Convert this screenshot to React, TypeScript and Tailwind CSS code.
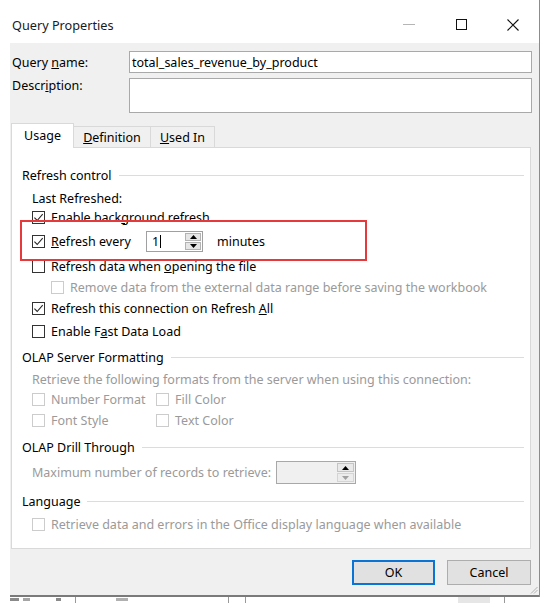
import React from "react";

function Tick() {
  return (
    <svg width="11" height="11" viewBox="0 0 11 11" fill="none" stroke="#262626" strokeWidth="1.1">
      <path d="M1.4 5.6 L4.2 8.5 L9.7 2.1" />
    </svg>
  );
}

function Checkbox({ checked = false, disabled = false }: { checked?: boolean; disabled?: boolean }) {
  return (
    <span
      className={`flex h-[13px] w-[13px] shrink-0 items-center justify-center border bg-white ${
        disabled ? "border-[#cccccc]" : "border-[#333333]"
      }`}
    >
      {checked && <Tick />}
    </span>
  );
}

function Group({ label }: { label: string }) {
  return (
    <div className="flex h-[19px] items-center gap-[7px] pl-[10px] pr-[6px]">
      <span className="whitespace-nowrap">{label}</span>
      <span className="h-px flex-1 bg-[#dcdcdc]" />
    </div>
  );
}

function Option({
  children,
  checked = false,
  disabled = false,
  pad = "pl-[20px]",
  className = "",
}: {
  children: React.ReactNode;
  checked?: boolean;
  disabled?: boolean;
  pad?: string;
  className?: string;
}) {
  return (
    <div className={`flex h-[19px] items-center gap-[6px] ${pad} ${disabled ? "text-[#9a9a9a]" : ""} ${className}`}>
      <Checkbox checked={checked} disabled={disabled} />
      <span className="whitespace-nowrap">{children}</span>
    </div>
  );
}

function Arrow({ up, color = "#000" }: { up?: boolean; color?: string }) {
  return (
    <svg width="7" height="4" viewBox="0 0 7 4">
      <path d={up ? "M0 4 L3.5 0 L7 4 Z" : "M0 0 L3.5 4 L7 0 Z"} fill={color} />
    </svg>
  );
}

export default function App() {
  return (
    <div className="relative h-[608px] w-[552px] overflow-hidden bg-white font-['Noto_Sans',sans-serif] text-[12.5px] leading-[16px] text-black">
      <div className="w-[540px] border-r border-[#8c8c8c]">
        {/* title bar */}
        <div className="flex h-[43px] items-center bg-white pt-[6px]">
          <span className="pl-[12px] text-[12.7px] text-[#1a1a1a]">Query Properties</span>
          <div className="ml-auto flex">
            <span className="flex h-[30px] w-[52px] items-center justify-center">
              <span className="h-px w-[12px] bg-[#b5b5b5]" />
            </span>
            <span className="flex h-[30px] w-[52px] items-center justify-center">
              <span className="h-[11px] w-[11px] border border-[#111]" />
            </span>
            <span className="flex h-[30px] w-[52px] items-center justify-center">
              <svg width="12" height="12" viewBox="0 0 12 12" stroke="#111" strokeWidth="1.1">
                <path d="M0.5 0.5 L11.5 11.5 M11.5 0.5 L0.5 11.5" />
              </svg>
            </span>
          </div>
        </div>

        {/* body */}
        <div className="relative ml-[10px] flex h-[554px] flex-col border-b-2 border-[#7a7a7a] bg-[#f0f0f0] pl-[1px] pt-[8px]">
          <div className="flex h-[22px] items-center">
            <span className="w-[118px] pl-[1px] pt-px">
              Query <u>n</u>ame:
            </span>
            <div className="flex h-[22px] w-[403px] items-center border border-[#a9a9a9] bg-white pl-[2px] pt-px">
              total_sales_revenue_by_product
            </div>
          </div>
          <div className="mt-[5px] flex items-start">
            <span className="w-[118px] pl-[1px]">
              Descr<u>i</u>ption:
            </span>
            <div className="h-[35px] w-[403px] border border-[#a9a9a9] bg-white" />
          </div>

          {/* tabs */}
          <div className="mt-[10px] flex h-[24px] items-end">
            <div className="relative z-10 -mb-px flex h-[25px] w-[63px] items-center justify-center border border-b-0 border-[#d9d9d9] bg-white">
              Usa<u>g</u>e
            </div>
            <div className="flex h-[21px] w-[77px] items-center justify-center border border-b-0 border-l-0 border-[#d9d9d9] pt-px">
              <u>D</u>efinition
            </div>
            <div className="flex h-[21px] w-[64px] items-center justify-center border border-b-0 border-l-0 border-[#d9d9d9] pt-px">
              <u>U</u>sed In
            </div>
          </div>

          {/* panel */}
          <div className="relative flex h-[402px] w-[520px] flex-col border border-[#d9d9d9] bg-white pt-[18px]">
            <Group label="Refresh control" />
            <div className="mt-[4px] flex h-[19px] items-center pl-[20px]">Last Refreshed:</div>
            <Option checked>
              Enable back<u>g</u>round refresh
            </Option>
            <div className="mt-[4px] flex h-[21px] items-center gap-[6px] pl-[20px]">
              <Checkbox checked />
              <span className="w-[89px] whitespace-nowrap">
                <u>R</u>efresh every
              </span>
              <div className="flex h-[21px] w-[57px] border border-[#a0a0a0] bg-white">
                <div className="flex flex-1 items-center pl-[5px]">
                  1<span className="ml-px h-[13px] w-px bg-black" />
                </div>
                <div className="flex w-[18px] flex-col gap-px p-px">
                  <span className="flex flex-1 items-center justify-center border border-[#b3b3b3] bg-[#e6e6e6]">
                    <Arrow up />
                  </span>
                  <span className="flex flex-1 items-center justify-center border border-[#b3b3b3] bg-[#e6e6e6]">
                    <Arrow />
                  </span>
                </div>
              </div>
              <span className="ml-[8px]">minutes</span>
            </div>
            <Option className="mt-[5px]">
              Refresh data when <u>o</u>pening the file
            </Option>
            <Option disabled pad="pl-[39px]" className="mt-[2px]">
              Remove data from the external data range before saving the workbook
            </Option>
            <Option checked className="mt-[2px]">
              Refresh this connection on Refresh <u>A</u>ll
            </Option>
            <Option className="mt-[4px]">
              Enable F<u>a</u>st Data Load
            </Option>

            <div className="mt-[7px]">
              <Group label="OLAP Server Formatting" />
            </div>
            <div className="mt-[3px] flex h-[19px] items-center pl-[20px] text-[#9a9a9a]">
              Retrieve the following formats from the server when using this connection:
            </div>
            <div className="mt-px flex">
              <Option disabled className="w-[144px]">
                Number Format
              </Option>
              <Option disabled pad="pl-0">
                Fill Color
              </Option>
            </div>
            <div className="mt-[2px] flex">
              <Option disabled className="w-[144px]">
                Font Style
              </Option>
              <Option disabled pad="pl-0">
                Text Color
              </Option>
            </div>

            <div className="mt-[8px]">
              <Group label="OLAP Drill Through" />
            </div>
            <div className="mt-[4px] flex h-[23px] items-center pl-[20px] text-[#9a9a9a]">
              <span className="w-[244px] whitespace-nowrap">Maximum number of records to retrieve:</span>
              <div className="flex h-[23px] w-[80px] border border-[#a8a8a8] bg-[#f0f0f0]">
                <div className="flex-1" />
                <div className="flex w-[19px] flex-col gap-px p-px">
                  <span className="flex flex-1 items-center justify-center border border-[#c4c4c4] bg-[#e9e9e9]">
                    <Arrow up />
                  </span>
                  <span className="flex flex-1 items-center justify-center border border-[#d4d4d4] bg-[#ececec]">
                    <Arrow color="#a0a0a0" />
                  </span>
                </div>
              </div>
            </div>

            <div className="mt-[8px]">
              <Group label="Language" />
            </div>
            <Option disabled className="mt-[4px]">
              Retrieve data and errors in the Office display language when available
            </Option>

            {/* highlight box */}
            <div className="absolute left-[8px] top-[72px] h-[41px] w-[347px] border-2 border-[#e5393b]" />
          </div>

          {/* buttons */}
          <div className="mt-[11px] flex gap-[12px] pl-[341px]">
            <button className="flex h-[25px] w-[83px] items-center justify-center border-2 border-[#0a74d6] bg-[#e1e1e1]">
              OK
            </button>
            <button className="flex h-[25px] w-[84px] items-center justify-center border border-[#adadad] bg-[#e1e1e1]">
              Cancel
            </button>
          </div>

          {/* resize grip */}
          <svg className="absolute bottom-[1px] right-[1px]" width="8" height="8" viewBox="0 0 8 8" stroke="#b0b0b0">
            <path d="M7.5 1 L1 7.5 M7.5 4 L4 7.5" />
          </svg>
        </div>
      </div>

      {/* worksheet tab strip peeking below the dialog */}
      <div className="flex h-[11px] items-start pl-[10px]">
        <span className="mt-px h-[3px] w-[9px] bg-[#8a8a8a]" />
        <span className="ml-[4px] mt-px h-[3px] w-[7px] bg-[#a5a5a5]" />
        <span className="ml-[26px] mt-px h-[3px] w-[5px] bg-[#8a8a8a]" />
        <span className="ml-[14px] h-[6px] w-px bg-[#999]" />
        <span className="ml-[40px] mt-px h-[3px] w-[12px] bg-[#b0b0b0]" />
        <span className="ml-[100px] h-[6px] w-px bg-[#999]" />
        <span className="ml-[16px] h-[6px] w-px bg-[#999]" />
        <span className="ml-[212px] h-[6px] w-[32px] bg-[#e6e6e6]" />
        <span className="ml-[14px] h-[6px] w-px bg-[#999]" />
      </div>
    </div>
  );
}
